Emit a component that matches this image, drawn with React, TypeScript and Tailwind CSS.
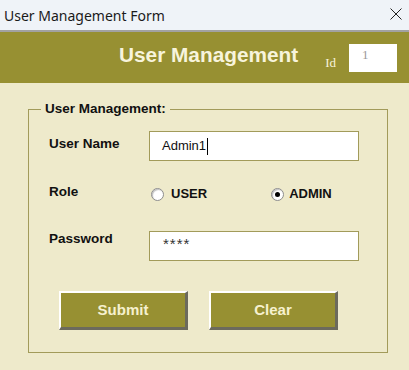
import React from "react";

function Radio({ checked }: { checked?: boolean }) {
  return (
    <span className="relative inline-flex h-[13px] w-[13px] items-center justify-center rounded-full border border-[#8d8d8d] bg-white shadow-[inset_1px_1px_1px_rgba(0,0,0,0.25)]">
      {checked && <span className="h-[5px] w-[5px] rounded-full bg-black" />}
    </span>
  );
}

export default function App() {
  return (
    <div
      className="flex h-[370px] w-[409px] flex-col overflow-hidden bg-[#eeeacb]"
      style={{ fontFamily: '"Liberation Sans", Arial, sans-serif' }}
    >
      {/* Title bar */}
      <div className="flex h-[30px] items-center justify-between bg-[#eff3f8] pl-[4px] pr-[7px]">
        <span
          className="text-[14px] text-[#1a1a1a]"
          style={{ fontFamily: '"Noto Sans", "Open Sans", sans-serif' }}
        >
          User Management Form
        </span>
        <svg width="12" height="12" viewBox="0 0 12 12" className="mb-[3px]">
          <path d="M0.5 0.5 L11.5 11.5 M11.5 0.5 L0.5 11.5" stroke="#222" strokeWidth="1" fill="none" />
        </svg>
      </div>
      <div className="h-[2px] bg-[#a2a2a2]" />
      {/* Header */}
      <div className="flex h-[51px] items-center justify-end bg-[#979032] pr-[12px]">
        <span className="mb-[5px] text-[20.8px] font-bold text-[#f7f4dc]">User Management</span>
        <span
          className="ml-[27px] mt-[10px] text-[13px] text-[#f7f4dc]"
          style={{ fontFamily: '"Liberation Serif", serif' }}
        >
          Id
        </span>
        <div
          className="ml-[13px] flex h-[28px] w-[48px] items-start bg-white pl-[13px] pt-[1px] text-[13px] text-[#9a9a9a]"
          style={{ fontFamily: '"Liberation Serif", serif' }}
        >
          1
        </div>
      </div>
      {/* Body */}
      <div className="flex-1 pl-[28px] pt-[26px]">
        <div className="relative h-[244px] w-[360px] border border-[#a29b5a] pl-[20px] pt-[21px]">
          <span className="absolute left-[12px] top-[-9px] bg-[#eeeacb] px-[4px] text-[13.5px] font-bold leading-[16px] text-[#111]">
            User Management:
          </span>
          {/* User name row */}
          <div className="flex items-start">
            <span className="mt-[5px] w-[100px] text-[13.5px] font-bold leading-[16px] text-[#111]">User Name</span>
            <div className="flex h-[30px] w-[210px] items-center border border-[#a29b5a] bg-white pl-[12px] text-[13px] text-[#111]">
              Admin1
              <span className="ml-[1px] h-[17px] w-[1px] bg-black" />
            </div>
          </div>
          {/* Role row */}
          <div className="mt-[23px] flex items-start">
            <span className="w-[100px] text-[13.5px] font-bold leading-[16px] text-[#111]">Role</span>
            <div className="ml-[2px] mt-[2px] flex items-center">
              <Radio />
              <span className="ml-[7px] text-[13px] font-bold leading-[16px] text-[#111]">USER</span>
              <span className="ml-[64px] flex items-center">
                <Radio checked />
                <span className="ml-[5px] text-[13px] font-bold leading-[16px] text-[#111]">ADMIN</span>
              </span>
            </div>
          </div>
          {/* Password row */}
          <div className="mt-[29px] flex items-start">
            <span className="w-[100px] text-[13.5px] font-bold leading-[16px] text-[#111]">Password</span>
            <div className="flex h-[30px] w-[210px] items-start border border-[#a29b5a] bg-white pl-[13px] pt-[3px] text-[15px] leading-[18px] tracking-[1px] text-[#333]">
              ****
            </div>
          </div>
          {/* Buttons */}
          <div className="ml-[10px] mt-[30px] flex gap-[21px]">
            <button className="flex h-[39px] w-[129px] items-center justify-center border-b-[3px] border-l-2 border-r-[3px] border-t-2 border-b-[#6c6a5c] border-l-white border-r-[#6c6a5c] border-t-white bg-[#979032] text-[15px] font-bold text-[#f6f1cf]">
              Submit
            </button>
            <button className="flex h-[39px] w-[129px] items-center justify-center border-b-[3px] border-l-2 border-r-[3px] border-t-2 border-b-[#6c6a5c] border-l-white border-r-[#6c6a5c] border-t-white bg-[#979032] text-[15px] font-bold text-[#f6f1cf]">
              Clear
            </button>
          </div>
        </div>
      </div>
    </div>
  );
}
